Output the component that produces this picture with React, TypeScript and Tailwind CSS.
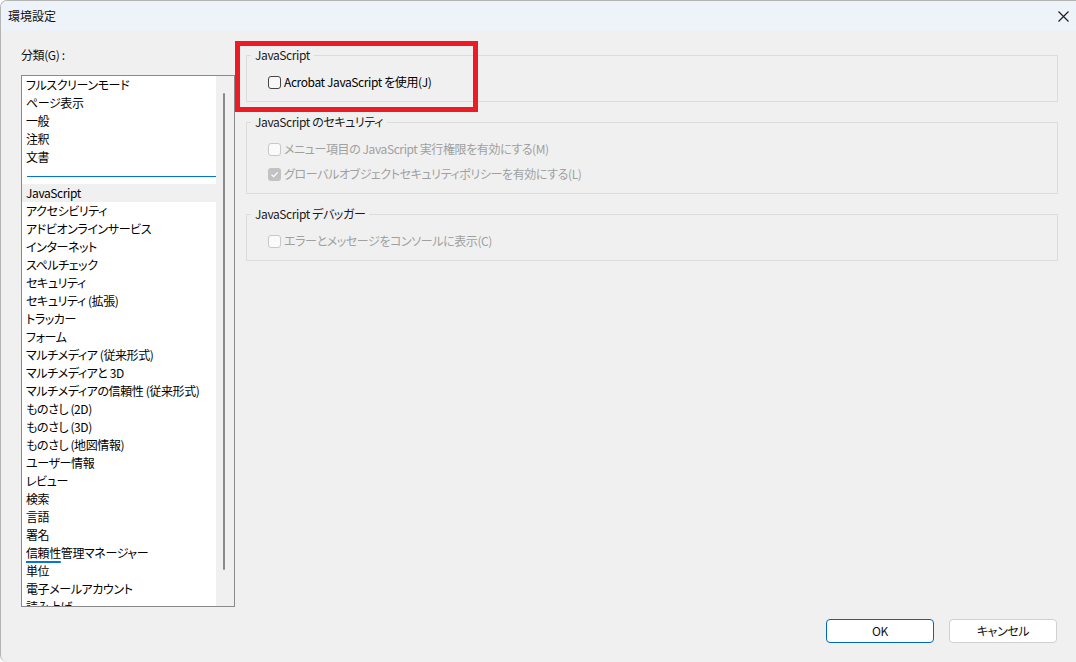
import React from "react";

const font = { fontFamily: '"Noto Sans CJK JP", "Noto Sans", sans-serif' };

const topItems = ["フルスクリーンモード", "ページ表示", "一般", "注釈", "文書"];
const restItems = [
  "アクセシビリティ",
  "アドビオンラインサービス",
  "インターネット",
  "スペルチェック",
  "セキュリティ",
  "セキュリティ (拡張)",
  "トラッカー",
  "フォーム",
  "マルチメディア (従来形式)",
  "マルチメディアと 3D",
  "マルチメディアの信頼性 (従来形式)",
  "ものさし (2D)",
  "ものさし (3D)",
  "ものさし (地図情報)",
  "ユーザー情報",
  "レビュー",
  "検索",
  "言語",
  "署名",
  "__TRUST__",
  "単位",
  "電子メールアカウント",
  "読み上げ",
];

function Check({ state }: { state: "on" | "off" | "disabled" | "disabledChecked" }) {
  if (state === "disabledChecked") {
    return (
      <span className="w-[13px] h-[13px] rounded-[3px] bg-[#c2c2c2] flex items-center justify-center shrink-0">
        <svg width="9" height="9" viewBox="0 0 9 9">
          <path d="M1.5 4.6 L3.6 6.6 L7.6 2.4" fill="none" stroke="#ffffff" strokeWidth="1.3" />
        </svg>
      </span>
    );
  }
  if (state === "disabled") {
    return <span className="w-[13px] h-[13px] rounded-[3px] border border-[#c8c8c8] bg-[#fafafa] shrink-0" />;
  }
  return <span className="w-[13px] h-[13px] rounded-[3px] border border-[#454545] bg-[#f7f7f7] shrink-0" />;
}

function Row({ state, label, disabled }: { state: "on" | "off" | "disabled" | "disabledChecked"; label: string; disabled?: boolean }) {
  return (
    <div className="flex items-center h-[16px] gap-[3px]">
      <Check state={state} />
      <span className={`text-[12px] leading-[16px] whitespace-nowrap ${disabled ? "text-[#a0a0a0]" : "text-[#000000]"}`}>{label}</span>
    </div>
  );
}

function Group({ title, height, children, className }: { title: string; height: string; children: React.ReactNode; className?: string }) {
  return (
    <div className={`relative border border-[#dcdcdc] ${height} pl-[21px] pt-[18px] ${className ?? ""}`}>
      <span className="absolute left-[4px] top-[-9px] px-[4px] bg-[#f0f0f0] text-[12px] leading-[16px] text-[#1a1a1a] whitespace-nowrap">
        {title}
      </span>
      <div className="flex flex-col gap-[9px]">{children}</div>
    </div>
  );
}

export default function App() {
  return (
    <div
      className="relative w-[1076px] h-[662px] bg-[#f0f0f0] flex flex-col overflow-hidden border-t border-l border-[#b4b4b4] rounded-tl-[7px] rounded-bl-[7px] tracking-[-0.4px] [font-feature-settings:'palt']"
      style={font}
    >
      {/* Title bar */}
      <div className="h-[30px] bg-[#eef3f9] flex items-center justify-between shrink-0">
        <span className="pl-[7px] text-[12px] leading-[16px] text-[#111] tracking-normal">環境設定</span>
        <div className="w-[24px] h-[24px] mr-[1px] flex items-center justify-center">
          <svg width="11" height="11" viewBox="0 0 11 11">
            <path d="M0.5 0.5 L10.5 10.5 M10.5 0.5 L0.5 10.5" stroke="#1a1a1a" strokeWidth="1.1" />
          </svg>
        </div>
      </div>

      {/* Body */}
      <div className="flex h-[576px] shrink-0">
        {/* Left column */}
        <div className="pl-[20px] w-[234px] shrink-0 flex flex-col">
          <div className="mt-[16px] text-[12px] leading-[16px] text-[#111]">分類(G) :</div>
          <div className="mt-[12px] w-[214px] h-[532px] border border-[#8a8a8a] bg-white flex overflow-hidden">
            <div className="flex-1 flex flex-col overflow-hidden">
              {topItems.map((t) => (
                <div key={t} className="h-[18px] shrink-0 pl-[4px] text-[12px] leading-[18px] text-[#000] whitespace-nowrap">
                  {t}
                </div>
              ))}
              <div className="h-[18px] shrink-0 flex items-center pl-[5px]">
                <div className="w-full h-[1px] bg-[#0078d4] mt-[2px]" />
              </div>
              <div className="h-[18px] shrink-0 pl-[4px] bg-[#f0f0f0] text-[12px] leading-[18px] text-[#000]">JavaScript</div>
              {restItems.map((t) =>
                t === "__TRUST__" ? (
                  <div key={t} className="h-[18px] shrink-0 pl-[4px] text-[12px] leading-[18px] text-[#000] whitespace-nowrap">
                    <span className="underline decoration-[#0078d4] decoration-[1.5px] underline-offset-[3px]">信頼性</span>
                    管理マネージャー
                  </div>
                ) : (
                  <div key={t} className="h-[18px] shrink-0 pl-[4px] text-[12px] leading-[18px] text-[#000] whitespace-nowrap">
                    {t}
                  </div>
                )
              )}
            </div>
            <div className="w-[18px] shrink-0 bg-[#f0f0f0] flex pt-[17px] pl-[7px]">
              <div className="w-[2px] h-[477px] rounded-full bg-[#8a8a8a]" />
            </div>
          </div>
        </div>

        {/* Right column */}
        <div className="ml-[11px] w-[812px] shrink-0 flex flex-col">
          <Group title="JavaScript" height="h-[47px]" className="mt-[24px]">
            <Row state="off" label="Acrobat JavaScript を使用(J)" />
          </Group>
          <Group title="JavaScript のセキュリティ" height="h-[72px]" className="mt-[20px]">
            <Row state="disabled" label="メニュー項目の JavaScript 実行権限を有効にする(M)" disabled />
            <Row state="disabledChecked" label="グローバルオブジェクトセキュリティポリシーを有効にする(L)" disabled />
          </Group>
          <Group title="JavaScript デバッガー" height="h-[47px]" className="mt-[20px]">
            <Row state="disabled" label="エラーとメッセージをコンソールに表示(C)" disabled />
          </Group>
        </div>
      </div>

      {/* Footer */}
      <div className="flex justify-end gap-[15px] pr-[19px] mt-[12px]">
        <button className="w-[108px] h-[24px] rounded-[4px] border border-[#0067c0] bg-white text-[12px] leading-[16px] text-[#111]">
          OK
        </button>
        <button className="w-[108px] h-[24px] rounded-[4px] border border-[#d0d0d0] bg-white text-[12px] leading-[16px] text-[#111]">
          キャンセル
        </button>
      </div>

      {/* Red annotation rectangle */}
      <div className="absolute left-[234px] top-[40px] w-[243px] h-[71px] border-[5px] border-[#ed1c24] pointer-events-none" />
    </div>
  );
}
